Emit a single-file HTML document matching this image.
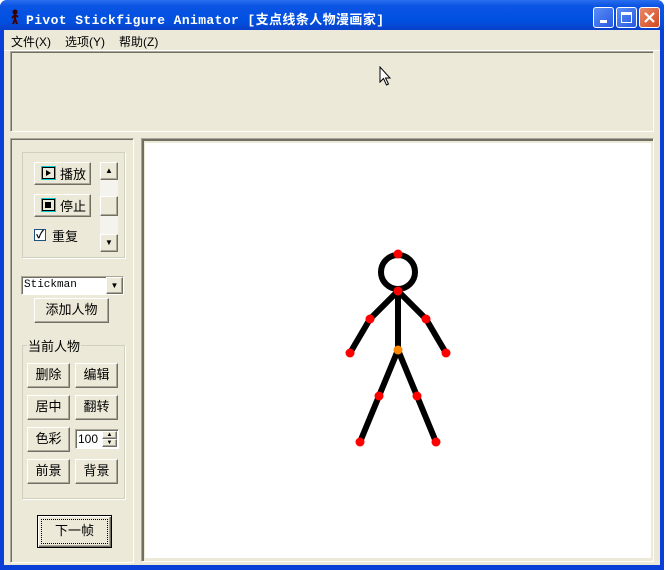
<!DOCTYPE html>
<html><head><meta charset="utf-8"><style>
*{margin:0;padding:0;box-sizing:border-box}
body{width:666px;height:570px;background:#fff;position:relative;overflow:hidden;font-family:"Liberation Sans","Noto Sans CJK SC","WenQuanYi Zen Hei",sans-serif;font-size:12px;color:#000}
.a{position:absolute}
.win{left:0;top:0;width:664px;height:570px;background:#0a3fd8;border-radius:7px 7px 0 0}
.title{left:0;top:0;width:664px;height:30px;background:linear-gradient(#2a6ef0,#0b54e3 20%,#0050e0 70%,#0a40c8);border-radius:7px 7px 0 0}
.client{left:4px;top:30px;width:656px;height:535px;background:#ece9d8}
.tb{color:#fff;font-family:"Liberation Mono","Noto Sans CJK SC",monospace;font-weight:bold;font-size:13px;left:26px;top:9px;white-space:nowrap;letter-spacing:0.4px}
.wb{top:7px;width:21px;height:21px;border:1px solid #fff;border-radius:3px;background:linear-gradient(135deg,#5b8ef8,#2659e0)}
.sunk{border:1px solid;border-color:#aca899 #fff #fff #aca899;box-shadow:inset 1px 1px 0 #716f64}
.btn{background:#ece9d8;border:1px solid;border-color:#fff #716f64 #716f64 #fff;box-shadow:inset -1px -1px 0 #aca899;text-align:center;font-size:12px}
.grp{border:1px solid #d0d0bf;box-shadow:1px 1px 0 #fff}
.menu span{margin-right:14px}
</style></head><body>
<div class="a win"></div>
<div class="a title"></div>
<svg class="a" style="left:10px;top:9px" width="10" height="16"><circle cx="5" cy="3" r="2.5" fill="#300"/><path d="M5 5 V10 M5 6 L2 9 M5 6 L8 8 M5 10 L3 15 M5 10 L7 15" stroke="#400" stroke-width="2"/></svg>
<div class="a tb">Pivot Stickfigure Animator [支点线条人物漫画家]</div>
<div class="a wb" style="left:593px"><div class="a" style="left:6px;top:12px;width:7px;height:3px;background:#fff"></div></div>
<div class="a wb" style="left:616px"><div class="a" style="left:4px;top:4px;width:11px;height:11px;border:1px solid #fff;border-top-width:3px"></div></div>
<div class="a wb" style="left:639px;background:linear-gradient(135deg,#e88a6a,#d3491f)"><svg width="19" height="19"><path d="M5 5 L14 14 M14 5 L5 14" stroke="#fff" stroke-width="2.2"/></svg></div>
<div class="a client"></div>
<div class="a menu" style="left:11px;top:33px;font-size:12px;white-space:nowrap"><span>文件(X)</span><span>选项(Y)</span><span>帮助(Z)</span></div>
<div class="a" style="left:4px;top:50px;width:656px;height:1px;background:#fff"></div>
<div class="a sunk" style="left:10px;top:51px;width:644px;height:81px"></div>
<svg class="a" style="left:379px;top:66px" width="13" height="21"><path d="M1 1 V16 L4.5 12.5 L7.5 19 L9.5 18 L6.5 12 H11 Z" fill="#fff" stroke="#000"/></svg>
<div class="a sunk" style="left:10px;top:138px;width:124px;height:425px"></div>
<div class="a sunk" style="left:141px;top:138px;width:513px;height:424px;box-shadow:inset 2px 2px 0 #716f64"></div>
<div class="a" style="left:145px;top:143px;width:506px;height:415px;background:#fff"></div>
<svg class="a" style="left:0;top:0" width="666" height="570">
<g stroke="#000" stroke-width="6" fill="none">
<circle cx="398" cy="272" r="17"/>
<path d="M398 291 V350 M398 291 L370 319 L350 353 M398 291 L426 319 L446 353 M398 350 L379 396 L360 442 M398 350 L417 396 L436 442"/>
</g>
<g fill="#f00"><circle cx="398" cy="254" r="4.5"/><circle cx="398" cy="291" r="4.5"/><circle cx="370" cy="319" r="4.5"/><circle cx="350" cy="353" r="4.5"/><circle cx="426" cy="319" r="4.5"/><circle cx="446" cy="353" r="4.5"/><circle cx="379" cy="396" r="4.5"/><circle cx="360" cy="442" r="4.5"/><circle cx="417" cy="396" r="4.5"/><circle cx="436" cy="442" r="4.5"/></g>
<circle cx="398" cy="350" r="4.5" fill="#f80"/>
</svg>
<div class="a grp" style="left:22px;top:152px;width:103px;height:106px"></div>
<div class="a btn" style="left:34px;top:162px;width:57px;height:23px"></div>
<div class="a" style="left:41px;top:166px;width:15px;height:14px;border:1px solid #0cc;background:#000;padding:1px"><div style="width:11px;height:10px;background:#ece9d8;position:relative"><div class="a" style="left:3px;top:2px;border-left:5px solid #000;border-top:3px solid transparent;border-bottom:3px solid transparent"></div></div></div>
<div class="a" style="left:60px;top:164px;font-size:13px">播放</div>
<div class="a btn" style="left:34px;top:194px;width:57px;height:23px"></div>
<div class="a" style="left:41px;top:198px;width:15px;height:14px;border:1px solid #0cc;background:#000;padding:1px"><div style="width:11px;height:10px;background:#ece9d8;position:relative"><div class="a" style="left:2px;top:2px;width:6px;height:6px;background:#000"></div></div></div>
<div class="a" style="left:60px;top:196px;font-size:13px">停止</div>
<div class="a" style="left:34px;top:229px;width:12px;height:12px;border:1px solid #1c5180;background:#fff;font-size:11px;line-height:10px;text-align:center;font-weight:bold">✓</div>
<div class="a" style="left:52px;top:226px;font-size:13px">重复</div>
<div class="a" style="left:100px;top:162px;width:18px;height:90px;background:#f4f3ee"></div>
<div class="a btn" style="left:100px;top:162px;width:18px;height:18px;font-size:8px;line-height:16px">▲</div>
<div class="a btn" style="left:100px;top:196px;width:18px;height:20px"></div>
<div class="a btn" style="left:100px;top:234px;width:18px;height:18px;font-size:8px;line-height:16px">▼</div>
<div class="a sunk" style="left:21px;top:276px;width:103px;height:19px;background:#fff"></div>
<div class="a" style="left:24px;top:279px;font-family:'Liberation Mono',monospace;font-size:11px">Stickman</div>
<div class="a btn" style="left:106px;top:277px;width:17px;height:17px;font-size:8px;line-height:15px">▼</div>
<div class="a btn" style="left:34px;top:298px;width:75px;height:25px;line-height:22px;font-size:13px">添加人物</div>
<div class="a grp" style="left:22px;top:345px;width:103px;height:154px"></div>
<div class="a" style="left:27px;top:336px;background:#ece9d8;padding:0 1px;font-size:13px">当前人物</div>
<div class="a btn" style="left:27px;top:363px;width:43px;height:25px;line-height:22px;font-size:13px">删除</div>
<div class="a btn" style="left:75px;top:363px;width:43px;height:25px;line-height:22px;font-size:13px">编辑</div>
<div class="a btn" style="left:27px;top:395px;width:43px;height:25px;line-height:22px;font-size:13px">居中</div>
<div class="a btn" style="left:75px;top:395px;width:43px;height:25px;line-height:22px;font-size:13px">翻转</div>
<div class="a btn" style="left:27px;top:427px;width:43px;height:25px;line-height:22px;font-size:13px">色彩</div>
<div class="a sunk" style="left:75px;top:429px;width:44px;height:20px;background:#fff"></div>
<div class="a" style="left:78px;top:432px;font-size:12px">100</div>
<div class="a btn" style="left:102px;top:431px;width:15px;height:8px;font-size:6px;line-height:6px">▲</div>
<div class="a btn" style="left:102px;top:439px;width:15px;height:8px;font-size:6px;line-height:6px">▼</div>
<div class="a btn" style="left:27px;top:459px;width:43px;height:25px;line-height:22px;font-size:13px">前景</div>
<div class="a btn" style="left:75px;top:459px;width:43px;height:25px;line-height:22px;font-size:13px">背景</div>
<div class="a btn" style="left:37px;top:515px;width:75px;height:33px;border:1px solid #000;box-shadow:inset 1px 1px 0 #fff,inset -1px -1px 0 #716f64,inset -2px -2px 0 #aca899"></div>
<div class="a" style="left:41px;top:519px;width:67px;height:25px;border:1px dotted #000;text-align:center;line-height:22px;font-size:13px">下一帧</div>
</body></html>
